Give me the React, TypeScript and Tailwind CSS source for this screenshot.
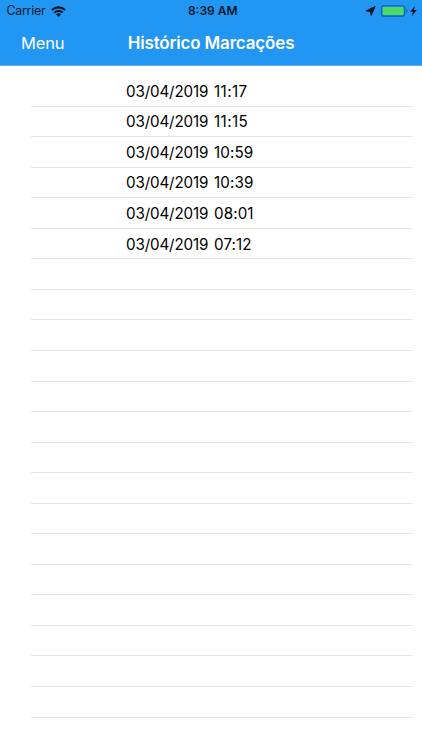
const entries = [
  { date: '03/04/2019', time: '11:17' },
  { date: '03/04/2019', time: '11:15' },
  { date: '03/04/2019', time: '10:59' },
  { date: '03/04/2019', time: '10:39' },
  { date: '03/04/2019', time: '08:01' },
  { date: '03/04/2019', time: '07:12' },
];

const emptyRows = Array.from({ length: 15 }, (_, i) => i);

function WifiIcon() {
  return (
    <svg width="15" height="11" viewBox="0 0 15 11" fill="none" stroke="#03101e" strokeWidth="2.1">
      <path d="M0.9 4.1a9.4 9.4 0 0 1 13.2 0" />
      <path d="M3.3 6.7a6 6 0 0 1 8.4 0" />
      <path d="M7.5 10.8 5.1 8.4a3.5 3.5 0 0 1 4.8 0Z" fill="#03101e" stroke="none" />
    </svg>
  );
}

function StatusBar() {
  return (
    <div className="grid h-[22px] grid-cols-[1fr_auto_1fr] items-center pl-[6.5px] pr-[5px] text-[#06182a]">
      <div className="flex h-[22px] items-center gap-[5.5px]">
        <span className="pb-px text-[12.4px] leading-[21px] tracking-[-0.25px]">Carrier</span>
        <WifiIcon />
      </div>
      <span className="pb-px pl-[2px] text-[12px] font-semibold leading-[21px]">8:39 AM</span>
      <div className="flex items-center justify-end">
        <svg width="11" height="10" viewBox="0 0 11 10" fill="#03101e" stroke="#03101e" strokeWidth="1" strokeLinejoin="round">
          <path d="M10.1 0.5 6.2 9.3 5.5 5.4 1 5Z" />
        </svg>
        <svg className="ml-[5px]" width="27" height="12" viewBox="0 0 27 12">
          <rect x="0.6" y="0.8" width="23" height="10.3" rx="2" fill="#2196f3" stroke="#14609f" strokeWidth="1.1" />
          <rect x="1.7" y="1.9" width="20.8" height="8.1" rx="1" fill="#4cd964" />
          <path d="M25 4v4a2.1 2.1 0 0 0 0-4Z" fill="#14609f" />
        </svg>
        <svg className="ml-[2px]" width="7" height="10" viewBox="0 0 7 10" fill="#03101e">
          <path d="M4.9 0 0.2 5.7H2.9L1.9 10 6.8 4.1H4Z" />
        </svg>
      </div>
    </div>
  );
}

export default function App() {
  return (
    <div className="h-[750px] w-[422px] overflow-hidden bg-white font-['Inter','Liberation_Sans',sans-serif]">
      <header className="h-[66px] border-b border-[#60aff2] bg-[#2196f3]">
        <StatusBar />
        <nav className="grid h-[42px] grid-cols-[1fr_auto_1fr] items-center pl-[21px] pr-[21px] text-white">
          <button className="text-left text-[16.5px] leading-[22px] tracking-[-0.15px]">Menu</button>
          <h1 className="text-[17px] font-semibold leading-[22px] tracking-[-0.17px]">Histórico Marcações</h1>
          <span />
        </nav>
      </header>
      <ul className="ml-[30.5px] mr-[10px] pt-[10.1px]">
        {entries.map(({ date, time }) => (
          <li key={time} className="flex h-[30.55px] items-center border-b border-[#e5e5e5] pl-[95.5px] pt-[2.6px] text-[15.2px] text-black">
            <span className="w-[88px] tracking-[-0.15px]">{date}</span>
            <span className={time.startsWith('11') ? 'tracking-[0.4px]' : 'tracking-[0.1px]'}>{time}</span>
          </li>
        ))}
        {emptyRows.map((row) => (
          <li key={row} className="h-[30.55px] border-b border-[#e5e5e5]" />
        ))}
      </ul>
    </div>
  );
}
